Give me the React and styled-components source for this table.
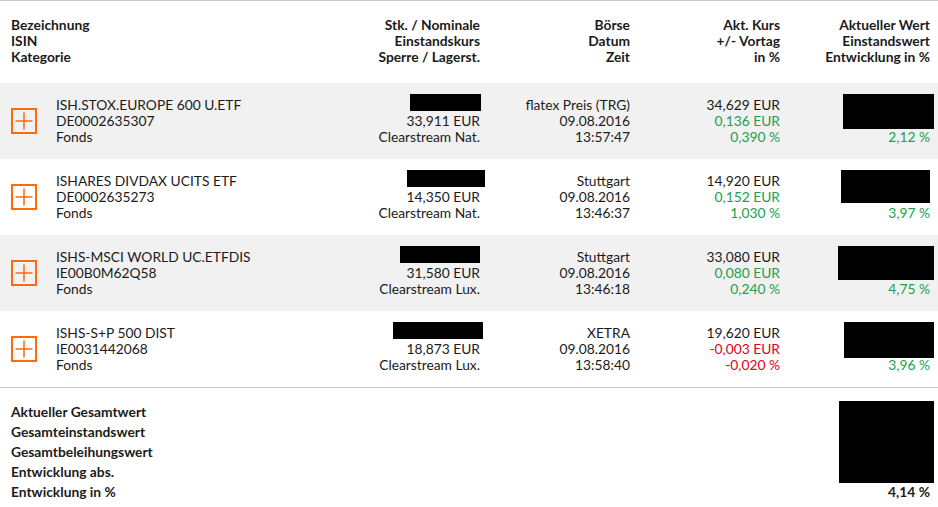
import React from 'react';
import styled, { createGlobalStyle } from 'styled-components';

const GlobalStyle = createGlobalStyle`
    body {
        margin: 0;
        background: #ffffff;
        font-family: Lato, "Open Sans", Arial, sans-serif;
        font-size: 13.8px;
        color: #1b1b1b;
    }
`
const Table = styled.div`
    width: 938px;
    border-top: 1px solid #c9c9c9;
`
const Grid = styled.div`
    display: grid;
    grid-template-columns: 319px 150px 150px 150px 150px;
    padding: 0 8px 0 11px;
    line-height: 16px;
`
const HeadRow = styled(Grid)`
    height: 82px;
    padding-top: 16px;
    box-sizing: border-box;
    font-weight: bold;
`
const Row = styled(Grid)`
    height: 76px;
    box-sizing: border-box;
    padding-top: 14px;
    background: ${p => (p.$shaded ? '#f1f1f1' : '#ffffff')};
`
const Cell = styled.div`
    display: flex;
    flex-direction: column;
    align-items: ${p => (p.$left ? 'flex-start' : 'flex-end')};
    text-align: ${p => (p.$left ? 'left' : 'right')};
    white-space: nowrap;
`
const NameCell = styled.div`
    display: flex;
    align-items: center;
    gap: 19px;
    height: 48px;
`
const Line = styled.span`
    color: ${p => (p.$tone === 'up' ? '#21a04e' : p.$tone === 'down' ? '#e2001a' : 'inherit')};
`
const Redacted = styled.div`
    background: #000;
    width: ${p => p.$w}px;
    height: ${p => p.$h}px;
    margin-top: ${p => p.$top || 0}px;
    margin-right: ${p => p.$right || 0}px;
    margin-bottom: ${p => p.$bottom || 0}px;
`
const PlusButton = styled.button`
    width: 26px;
    height: 26px;
    box-sizing: border-box;
    padding: 0;
    border: 2px solid #ff6a0d;
    background: transparent;
    display: flex;
    align-items: center;
    justify-content: center;
    cursor: pointer;
`
const Footer = styled(Grid)`
    border-top: 1px solid #c9c9c9;
    padding-top: 14px;
    line-height: 20px;
    font-weight: bold;
`
const FooterLabels = styled.div`
    display: flex;
    flex-direction: column;
    grid-column: 1 / 2;
`
const FooterValue = styled(Cell)`
    grid-column: 5 / 6;
`

function Plus() {
    return (
        <PlusButton aria-label="Details">
            <svg width="18" height="18" viewBox="0 0 18 18">
                <path d="M9 0.5 V17.5 M0.5 9 H17.5" stroke="#ff6a0d" strokeWidth="1.5" fill="none" />
            </svg>
        </PlusButton>
    )
}

const positions = [
    {
        name: 'ISH.STOX.EUROPE 600 U.ETF', isin: 'DE0002635307',
        stk: { w: 71, right: -1 }, kurs: '33,911 EUR', lager: 'Clearstream Nat.',
        boerse: 'flatex Preis (TRG)', datum: '09.08.2016', zeit: '13:57:47',
        akt: '34,629 EUR', diff: '0,136 EUR', pct: '0,390 %', tone: 'up',
        wert: { w: 91, h: 35, right: -4 }, entw: '2,12 %',
    },
    {
        name: 'ISHARES DIVDAX UCITS ETF', isin: 'DE0002635273',
        stk: { w: 78, right: -5 }, kurs: '14,350 EUR', lager: 'Clearstream Nat.',
        boerse: 'Stuttgart', datum: '09.08.2016', zeit: '13:46:37',
        akt: '14,920 EUR', diff: '0,152 EUR', pct: '1,030 %', tone: 'up',
        wert: { w: 89, h: 33, right: 0 }, entw: '3,97 %',
    },
    {
        name: 'ISHS-MSCI WORLD UC.ETFDIS', isin: 'IE00B0M62Q58',
        stk: { w: 80, right: 0 }, kurs: '31,580 EUR', lager: 'Clearstream Lux.',
        boerse: 'Stuttgart', datum: '09.08.2016', zeit: '13:46:18',
        akt: '33,080 EUR', diff: '0,080 EUR', pct: '0,240 %', tone: 'up',
        wert: { w: 96, h: 34, right: -4 }, entw: '4,75 %',
    },
    {
        name: 'ISHS-S+P 500 DIST', isin: 'IE0031442068',
        stk: { w: 90, right: -3 }, kurs: '18,873 EUR', lager: 'Clearstream Lux.',
        boerse: 'XETRA', datum: '09.08.2016', zeit: '13:58:40',
        akt: '19,620 EUR', diff: '-0,003 EUR', pct: '-0,020 %', tone: 'down',
        wert: { w: 90, h: 36, right: -4 }, entw: '3,96 %',
    },
]

export default function App() {
    return (
        <Table>
            <GlobalStyle />
            <HeadRow>
                <Cell $left>
                    <span>Bezeichnung</span>
                    <span>ISIN</span>
                    <span>Kategorie</span>
                </Cell>
                <Cell>
                    <span>Stk. / Nominale</span>
                    <span>Einstandskurs</span>
                    <span>Sperre / Lagerst.</span>
                </Cell>
                <Cell>
                    <span>Börse</span>
                    <span>Datum</span>
                    <span>Zeit</span>
                </Cell>
                <Cell>
                    <span>Akt. Kurs</span>
                    <span>+/- Vortag</span>
                    <span>in %</span>
                </Cell>
                <Cell>
                    <span>Aktueller Wert</span>
                    <span>Einstandswert</span>
                    <span>Entwicklung in %</span>
                </Cell>
            </HeadRow>
            {positions.map((p, i) => (
                <Row key={p.isin} $shaded={i % 2 === 0}>
                    <NameCell>
                        <Plus />
                        <Cell $left>
                            <span>{p.name}</span>
                            <span>{p.isin}</span>
                            <span>Fonds</span>
                        </Cell>
                    </NameCell>
                    <Cell>
                        <Redacted $w={p.stk.w} $h={17} $top={-3} $right={p.stk.right} $bottom={2} />
                        <span>{p.kurs}</span>
                        <span>{p.lager}</span>
                    </Cell>
                    <Cell>
                        <span>{p.boerse}</span>
                        <span>{p.datum}</span>
                        <span>{p.zeit}</span>
                    </Cell>
                    <Cell>
                        <span>{p.akt}</span>
                        <Line $tone={p.tone}>{p.diff}</Line>
                        <Line $tone={p.tone}>{p.pct}</Line>
                    </Cell>
                    <Cell>
                        <Redacted $w={p.wert.w} $h={p.wert.h} $top={-3} $right={p.wert.right} $bottom={32 - p.wert.h + 3} />
                        <Line $tone="up">{p.entw}</Line>
                    </Cell>
                </Row>
            ))}
            <Footer>
                <FooterLabels>
                    <span>Aktueller Gesamtwert</span>
                    <span>Gesamteinstandswert</span>
                    <span>Gesamtbeleihungswert</span>
                    <span>Entwicklung abs.</span>
                    <span>Entwicklung in %</span>
                </FooterLabels>
                <FooterValue>
                    <Redacted $w={95} $h={82} $top={-1} $right={-4} $bottom={-1} />
                    <span>4,14 %</span>
                </FooterValue>
            </Footer>
        </Table>
    )
}
